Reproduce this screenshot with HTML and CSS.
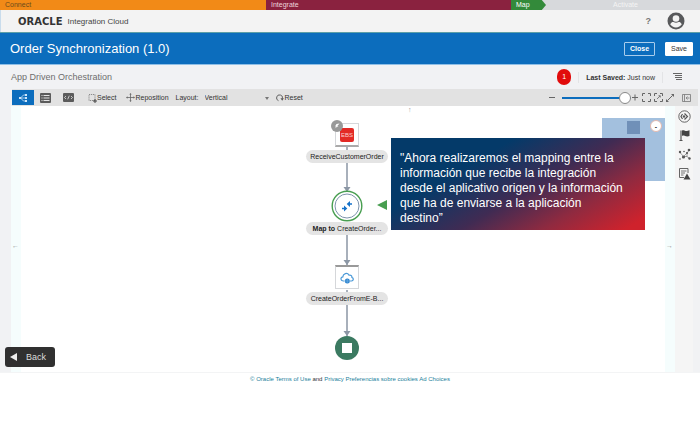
FILE: index.html
```html
<!DOCTYPE html>
<html lang="es">
<head>
    <meta charset="UTF-8">
    <meta name="viewport" content="width=device-width, initial-scale=1.0">
    <title>Order Synchronization (1.0)</title>
    <link rel="stylesheet" href="styles.css">
</head>
<body>
    <div class="steps">
        <div class="step step-connect">Connect</div>
        <div class="step step-integrate">Integrate</div>
        <div class="step step-map">Map</div>
        <div class="step step-activate">Activate</div>
    </div>

    <header class="brand-bar">
        <span class="logo">ORACLE</span>
        <span class="product">Integration Cloud</span>
        <span class="help">?</span>
        <svg class="avatar" viewBox="0 0 18 18">
            <circle cx="9" cy="9" r="8.500" fill="#58595b"/>
            <circle cx="9" cy="6.500" r="3.300" fill="#f3f3f3"/>
            <path d="M3.200 12.300c1.200-2 2.200-2.500 3.300-2.200 1.500.9 3.500.9 5 0 1.100-.3 2.100.2 3.300 2.200-1.300 2-3.300 3.200-5.800 3.200s-4.500-1.200-5.800-3.200z" fill="#f3f3f3"/>
        </svg>
    </header>

    <div class="title-bar">
        <h1>Order Synchronization (1.0)</h1>
        <button class="btn btn-outline">Close</button>
        <button class="btn btn-solid">Save</button>
    </div>

    <div class="sub-bar">
        <h2>App Driven Orchestration</h2>
        <span class="error-count">1</span>
        <span class="saved"><b>Last Saved:</b> Just now</span>
        <svg class="menu-icon" viewBox="0 0 10 8" stroke="#666" stroke-width="1">
            <path d="M0 .5h9M2 2.500h7M2 4.500h7M3 6.500h6"/>
        </svg>
    </div>

    <div class="toolbar">
        <button class="tool tool-active" aria-label="Canvas">
            <svg width="10" height="10" viewBox="0 0 10 10" fill="none" stroke="#cfe6fa">
                <path d="M7.500 2H5.500L2.500 5l3 3h2M3 5h4.500" stroke-width=".8"/>
                <path d="M7 1h2v2H7zM7 4h2v2H7zM7 7h2v2H7zM1 4h2v2H1z" fill="#cfe6fa" stroke="none"/>
            </svg>
        </button>
        <button class="tool tool-view" aria-label="List">
            <svg width="11" height="10" viewBox="0 0 11 10">
                <rect width="11" height="10" rx="1" fill="#5b5b5b"/>
                <path d="M1.500 2.500h1M1.500 5h1M1.500 7.500h1M3.500 2.500h6M3.500 5h6M3.500 7.500h6" stroke="#e4e4e4"/>
            </svg>
        </button>
        <button class="tool tool-view" aria-label="Code">
            <svg width="11" height="9" viewBox="0 0 11 9">
                <rect width="11" height="9" rx="1" fill="#5b5b5b"/>
                <path d="M3 3L1.500 4.500 3 6M8 3l1.500 1.500L8 6M6.300 2.700L4.700 6.300" fill="none" stroke="#e4e4e4" stroke-width=".8"/>
            </svg>
        </button>
        <button class="tool tool-select">
            <svg width="9" height="10" viewBox="0 0 9 10" fill="none" stroke="#666">
                <path d="M1 1.500h6v6H1z" stroke-width=".7" stroke-dasharray="1.200 .8"/>
                <path d="M7 6v4M5 8h4" stroke="#444"/>
            </svg>
            Select
        </button>
        <button class="tool tool-move">
            <svg width="9" height="9" viewBox="0 0 9 9" stroke="#666" fill="#666">
                <path d="M4.500 1v7M1 4.500h7" stroke-width=".8"/>
                <path d="M4.500 0l1.200 1.500H3.300zM4.500 9l1.200-1.500H3.300zM0 4.500l1.500-1.200v2.400zM9 4.500L7.500 3.300v2.400z" stroke="none"/>
            </svg>
            Reposition
        </button>
        <label for="layout">Layout:</label>
        <span class="select-box">
            <select id="layout">
                <option>Vertical</option>
                <option>Horizontal</option>
            </select>
        </span>
        <button class="tool tool-reset">
            <svg width="8" height="8" viewBox="0 0 8 8" fill="none" stroke="#555">
                <path d="M2.500 6.700A3 3 0 1 1 6.500 4.500" stroke-width=".9"/>
                <path d="M4.500 4.300h3.400L6.200 6.700z" fill="#555" stroke="none"/>
            </svg>
            Reset
        </button>

        <div class="zoom-tools">
            <svg width="7" height="7" viewBox="0 0 7 7" stroke="#666"><path d="M0 3.500h6"/></svg>
            <input class="zoom" type="range" min="0" max="100" value="100" aria-label="Zoom">
            <svg width="7" height="7" viewBox="0 0 7 7" stroke="#666"><path d="M0 3.500h6M3 .5v6"/></svg>
            <svg class="fit" width="9" height="9" viewBox="0 0 9 9" fill="none" stroke="#666">
                <path d="M.5 3V.5H3M6 .5h2.500V3M8.500 6v2.500H6M3 8.500H.5V6"/>
            </svg>
            <svg class="fit" width="9" height="9" viewBox="0 0 9 9" fill="none" stroke="#666">
                <path d="M.5 3V.5H3M6 .5h2.500V3M8.500 6v2.500H6M3 8.500H.5V6"/>
                <path d="M3 6l3-3M4.500 2.700h1.800v1.800" stroke-width=".8"/>
            </svg>
            <svg class="fit" width="8" height="8" viewBox="0 0 8 8" fill="#666" stroke="#666">
                <path d="M1.500 6.500l5-5"/><path d="M5 0h3v3zM0 5v3h3z" stroke="none"/>
            </svg>
            <svg class="panel" width="9" height="8" viewBox="0 0 9 8" fill="none" stroke="#777">
                <path d="M.5.5h8v7h-8zM2.500.5v7M7.500 4h-3M5.500 2.500L4 4l1.500 1.500" stroke-width=".8"/>
            </svg>
        </div>
    </div>

    <main class="workspace">
        <div class="canvas">
            <span class="pan pan-up">↑</span>
            <span class="pan pan-left">←</span>
            <span class="pan pan-right">→</span>

            <!-- connectors between the nodes -->
            <svg class="links" width="20" height="250" viewBox="0 0 20 250" fill="none" stroke="#8c97a5">
                <path d="M10 40v44M10 128v32M10 184v46" stroke-width="1.500"/>
                <path d="M6.500 81h7L10 86zM6.500 154h7L10 159zM6.500 225h7l-3.500 5z" fill="#8c97a5" stroke="none"/>
            </svg>

            <div class="node node-source">
                <div class="tile tile-bottom"><span class="ebs">EBS</span></div>
                <span class="trigger">
                    <svg width="6" height="6" viewBox="0 0 6 6"><path d="M5.500.5L2.500 1 1 3.500h1.500L.5 5.500 4.500 3H3.300z" fill="#fff"/></svg>
                </span>
                <span class="caption">ReceiveCustomerOrder</span>
            </div>

            <div class="node node-map">
                <svg width="32" height="32" viewBox="0 0 32 32" fill="none">
                    <circle cx="16" cy="16" r="14.800" fill="#fff" stroke="#489e50" stroke-width="1.400"/>
                    <circle cx="16" cy="16" r="12" stroke="#7f94ad" stroke-width="1"/>
                    <path d="M11 18.500h3.500M21 14h-3.500" stroke="#1672c9" stroke-width="1.700"/>
                    <path d="M13 15.500l3.300 3-3.300 3zM19 11l-3.300 3 3.300 3z" fill="#1672c9"/>
                </svg>
                <span class="caption"><b>Map to</b> CreateOrder...</span>
            </div>

            <div class="node node-target">
                <div class="tile tile-top">
                    <svg width="14" height="12" viewBox="0 0 14 12" fill="none">
                        <path d="M4.500 9H3.200C.3 8.700.2 5.300 2.800 4.900 3 1.500 7.300 0 9 3.200c2.300-.4 3 1 2.900 2.200C14 6.200 13.600 8.800 11.500 9H10" stroke="#4c9ad8" stroke-width="1.200"/>
                        <circle cx="7.300" cy="9" r="2.500" fill="#2f86d0"/>
                        <path d="M5 9h4.600M7.300 6.500v5" stroke="#8fc1ea" stroke-width=".4"/>
                    </svg>
                </div>
                <span class="caption">CreateOrderFromE-B...</span>
            </div>

            <div class="node node-end"><span class="stop"></span></div>

            <div class="minimap">
                <span class="view"></span>
                <button class="collapse" aria-label="Collapse">-</button>
            </div>

            <span class="pointer"></span>
            <div class="callout">"Ahora realizaremos el mapping entre la<br>información que recibe la integración<br>desde el aplicativo origen y la información<br>que ha de enviarse a la aplicación<br>destino”</div>
        </div>

        <nav class="side-bar">
            <svg width="13" height="13" viewBox="0 0 13 13" fill="none" stroke="#555">
                <circle cx="6.500" cy="6.500" r="5.700" stroke-width=".9"/>
                <path d="M6.500 3.500l3 3-3 3M4.500 4L3 6.500 4.500 9" stroke-width="1.200"/>
                <circle cx="6" cy="6.500" r="1.200" fill="#555" stroke="none"/>
            </svg>
            <svg width="13" height="13" viewBox="0 0 13 13">
                <path d="M3 1.500v10M1.500 11.500h3" stroke="#555" stroke-width="1.200"/>
                <path d="M4 1.500c2-.8 3 .7 5 .5l2.500-.7V7c-2 1-3.500.2-5-.3-1-.2-1.800 0-2.500.3z" fill="#444"/>
            </svg>
            <svg width="13" height="13" viewBox="0 0 13 13" fill="#555">
                <path d="M2 4.500l3.500 4L9 5l2-2.500M5.500 8.500H9l2 1.500M9 5v3.500" fill="none" stroke="#777" stroke-width=".7"/>
                <circle cx="2" cy="4" r="1.200"/><circle cx="5.500" cy="9" r="1.600"/><circle cx="9" cy="5" r="1.100"/><circle cx="11" cy="2" r="1.300"/><circle cx="11.500" cy="10.500" r="1.200"/><circle cx="6" cy="3.500" r=".8"/><circle cx="2" cy="11" r=".8"/>
            </svg>
            <svg width="13" height="13" viewBox="0 0 13 13" fill="none" stroke="#666">
                <path d="M6 10.500H1.500V1.500h8.500V6"/><path d="M3 4h5.500M3 6h4M3 8h2.500" stroke-width=".9"/>
                <path d="M9 6.500l3.500 6h-7z" fill="#444" stroke="none"/>
            </svg>
        </nav>

        <button class="back">Back</button>
    </main>

    <footer class="footer">
        <a href="#">© Oracle</a> <a href="#">Terms of Use</a> and <a href="#">Privacy</a> <a href="#">Preferencias sobre cookies</a> <a href="#">Ad Choices</a>
    </footer>
</body>
</html>
```

FILE: styles.css
```css
* {
    box-sizing: border-box;
}
body {
    margin: 0;
    font-family: "Liberation Sans", Arial, sans-serif;
    font-size: 7px;
    color: #333;
    background: #fff;
}
button, select {
    font: inherit;
    color: inherit;
    cursor: pointer;
}
svg {
    display: block;
    flex: none;
}

/* steps */
.steps {
    display: flex;
    height: 10px;
    line-height: 10px;
    background: #d7d9dc;
    color: #fff;
}
.step {
    padding-left: 5px;
}
.step-connect {
    width: 38%;
    background: #f28a17;
    color: #6b4a1c;
}
.step-integrate {
    width: 35%;
    background: #8a223f;
    color: #ecd5dc;
}
.step-map {
    width: 5%;
    background: #338a3a;
    clip-path: polygon(0 0, 88% 0, 100% 50%, 88% 100%, 0 100%);
}
.step-activate {
    flex: 1;
    text-align: center;
    color: #f4f4f4;
}

/* headers */
.brand-bar {
    display: flex;
    align-items: center;
    height: 22px;
    padding: 0 15px 0 17px;
    background: #f3f3f3;
    border-left: 1px solid #c9dcec;
}
.logo {
    font-family: "DejaVu Sans", sans-serif;
    font-size: 10px;
    font-weight: bold;
    color: #333;
}
.product {
    margin-left: 5px;
    font-size: 8px;
    color: #444;
}
.help {
    margin-left: auto;
    margin-right: 16px;
    font-size: 9px;
    font-weight: bold;
    color: #777;
}
.avatar {
    width: 18px;
    height: 18px;
}
.title-bar {
    display: flex;
    align-items: center;
    height: 33px;
    padding: 0 7px 0 10px;
    border-top: 1px solid #5c9fa8;
    border-bottom: 1px solid #8fbfe6;
    background: #0c6dbd;
    color: #fff;
}
h1 {
    flex: 1;
    margin: 0;
    font-size: 13px;
    font-weight: normal;
}
.btn {
    height: 14px;
    padding: 0 5px;
    border: 1px solid #fff;
    border-radius: 1px;
    line-height: 12px;
}
.btn-outline {
    margin-right: 10px;
    border-color: #a9cdec;
    background: transparent;
    font-weight: bold;
}
.btn-solid {
    background: #fff;
    color: #333;
}
.sub-bar {
    display: flex;
    align-items: center;
    height: 24px;
    padding: 0 17px 0 11px;
    background: #f1f2f4;
}
h2 {
    flex: 1;
    margin: 0;
    font-size: 9px;
    font-weight: normal;
    color: #6e6e6e;
}
.error-count {
    width: 14px;
    height: 16px;
    border-radius: 7px;
    background: #e10c0c;
    color: #fff;
    line-height: 16px;
    text-align: center;
}
.saved {
    margin-left: 7px;
    padding: 2px 7px;
    border: solid #e3e4e6;
    border-width: 0 1px;
}
.menu-icon {
    width: 10px;
    height: 8px;
    margin-left: 10px;
}

/* toolbar */
.toolbar {
    display: flex;
    align-items: center;
    height: 17px;
    padding-right: 7px;
    margin: 0 2px 0 12px;
    background: #e2e2e2;
    box-shadow: -12px 0 #f1f2f4, 2px 0 #f1f2f4;
}
.tool {
    display: flex;
    align-items: center;
    padding: 0;
    border: 0;
    background: none;
}
.tool-active {
    justify-content: center;
    width: 22px;
    height: 15px;
    background: #0c6dbd;
}
.tool-view {
    justify-content: center;
    width: 23px;
}
.tool-select {
    margin-left: 8px;
}
.tool-move {
    margin-left: 10px;
}
.toolbar label {
    margin: 0 6px 0 7px;
}
.select-box {
    position: relative;
    flex: 0 0 64px;
}
.select-box::after {
    content: "";
    position: absolute;
    top: 3px;
    right: 0;
    border: 2px solid transparent;
    border-top: 3px solid #777;
    pointer-events: none;
}
.select-box select {
    display: block;
    width: 100%;
    padding: 0;
    border: 0;
    background: none;
    appearance: none;
}
.tool-reset {
    gap: 1px;
    margin-left: 7px;
}
.zoom-tools {
    display: flex;
    align-items: center;
    margin-left: auto;
}
.zoom {
    width: 69px;
    height: 12px;
    margin: 0 1px 0 6px;
    appearance: none;
    background: linear-gradient(#0c6dbd, #0c6dbd) center / 100% 2px no-repeat;
}
.zoom::-webkit-slider-thumb {
    appearance: none;
    width: 12px;
    height: 12px;
    border: 1px solid #888;
    border-radius: 50%;
    background: #fff;
}
.fit {
    margin-left: 3px;
}
.panel {
    margin-left: 8px;
}

/* workspace */
.workspace {
    position: relative;
    display: flex;
    height: 267px;
    padding: 0 7px 0 11px;
    border-bottom: 1px solid #f3f4f5;
    background: #f1f2f4;
}
.canvas {
    position: relative;
    flex: 1;
    background: #fff;
    border: 1px solid #f5fdfd;
    border-width: 0 10px;
}
.pan {
    position: absolute;
    color: #999;
}
.pan-up {
    top: 0;
    left: 387px;
}
.pan-left {
    top: 136px;
    left: -9px;
}
.pan-right {
    top: 136px;
    right: -8px;
}
.links {
    position: absolute;
    top: 0;
    left: 316px;
}
.node {
    position: absolute;
    left: 284px;
    display: flex;
    flex-direction: column;
    align-items: center;
    width: 84px;
}
.node-source {
    top: 17px;
}
.node-map {
    top: 84px;
}
.node-target {
    top: 159px;
}
.node-end {
    top: 230px;
}
.tile {
    display: flex;
    align-items: center;
    justify-content: center;
    width: 24px;
    height: 24px;
    margin-bottom: 3px;
    border: 1px solid #d5d7da;
    background: #fff;
}
.tile-bottom {
    border-bottom: 2px solid #aaa;
}
.tile-top {
    border-top: 2px solid #999;
}
.ebs {
    width: 14px;
    height: 14px;
    border-radius: 2px;
    background: #e32a26;
    color: #fbd0cf;
    font-size: 6px;
    line-height: 14px;
    text-align: center;
}
.trigger {
    position: absolute;
    top: -3px;
    left: 26px;
    display: grid;
    place-items: center;
    width: 12px;
    height: 12px;
    border-radius: 50%;
    background: #999;
}
.caption {
    width: 82px;
    height: 13px;
    border-radius: 7px;
    background: #e4e4e4;
    color: #222;
    line-height: 13px;
    text-align: center;
    white-space: nowrap;
}
.stop {
    width: 24px;
    height: 24px;
    border-radius: 50%;
    background: linear-gradient(#fff, #fff) center / 10px 10px no-repeat #3b7a61;
}
.minimap {
    position: absolute;
    top: 12px;
    right: 0;
    width: 63px;
    height: 63px;
    background: #a3c0de;
}
.view {
    position: absolute;
    top: 3px;
    left: 25px;
    width: 13px;
    height: 13px;
    background: #7090b8;
}
.collapse {
    position: absolute;
    top: 2px;
    right: 3px;
    width: 12px;
    height: 12px;
    padding: 0;
    border: 1px solid #e3b9b0;
    border-radius: 50%;
    background: #fff;
    font-weight: bold;
    line-height: 9px;
}
.pointer {
    position: absolute;
    top: 94px;
    left: 356px;
    border: 5px solid transparent;
    border-right: 10px solid #489e50;
    border-left: 0;
}
.callout {
    position: absolute;
    top: 32px;
    right: 20px;
    width: 254px;
    height: 92px;
    padding: 13px 0 0 9px;
    background: linear-gradient(150deg, #043a69 30%, #402b53 55%, #8f2a40 75%, #cf222c 95%);
    color: #fff;
    font-size: 12px;
    line-height: 15px;
    white-space: nowrap;
}
.side-bar {
    display: flex;
    flex-direction: column;
    align-items: center;
    gap: 6px;
    width: 18px;
    padding-top: 4px;
    background: #f5f5f5;
}
.back {
    position: absolute;
    bottom: 5px;
    left: 5px;
    display: flex;
    align-items: center;
    gap: 9px;
    width: 50px;
    height: 20px;
    padding: 0 5px;
    border: 0;
    border-radius: 3px;
    background: #303030;
    color: #ddd;
    font-size: 9px;
}
.back::before {
    content: "";
    border: 4px solid transparent;
    border-right: 7px solid #eee;
    border-left: 0;
}

.footer {
    padding-top: 3px;
    font-size: 6px;
    text-align: center;
}
.footer a {
    color: #1d7f9c;
    text-decoration: none;
}
```
